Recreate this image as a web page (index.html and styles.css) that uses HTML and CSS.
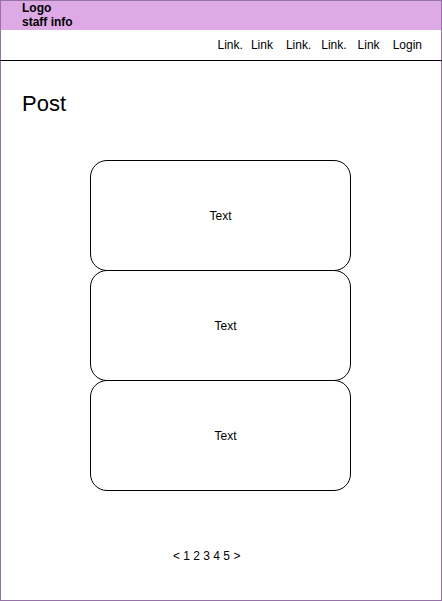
FILE: index.html
```html
<!DOCTYPE html>
<html>
<head>
<meta charset="utf-8">
<link rel="stylesheet" href="styles.css">
</head>
<body>
<div class="frame">
  <header class="top">
    <div class="logo">Logo<br>staff info</div>
  </header>
  <nav class="nav">
    <span class="l1">Link.</span>
    <span class="l2">Link</span>
    <span class="l3">Link.</span>
    <span class="l4">Link.</span>
    <span class="l5">Link</span>
    <span class="l6">Login</span>
  </nav>
  <main class="main">
    <h1 class="title">Post</h1>
    <div class="cards">
      <div class="card">Text</div>
      <div class="card shift">Text</div>
      <div class="card shift">Text</div>
    </div>
    <div class="pager">&lt; 1 2 3 4 5 &gt;</div>
  </main>
</div>
</body>
</html>
```
FILE: styles.css
```css
html, body {
  margin: 0;
  padding: 0;
  background: #fff;
}
body {
  font-family: "Liberation Sans", Arial, sans-serif;
  color: #000;
}
.frame {
  width: 442px;
  height: 601px;
  box-sizing: border-box;
  border: 1px solid #9673a6;
  display: flex;
  flex-direction: column;
}
.top {
  background: #ddaae6;
  height: 29px;
  box-sizing: border-box;
  padding: 0 0 0 21px;
}
.logo {
  font-size: 12px;
  font-weight: bold;
  line-height: 14px;
}
.nav {
  height: 30px;
  border-bottom: 1px solid #000;
  display: flex;
  justify-content: flex-end;
  align-items: center;
  font-size: 12px;
  line-height: 14px;
  padding-right: 20px;
  margin: 0 -1px;
  padding-left: 1px;
}
.l2 { margin-left: 8px; }
.l3 { margin-left: 13px; }
.l4 { margin-left: 10px; }
.l5 { margin-left: 11px; }
.l6 { margin-left: 13px; }
.main {
  display: flex;
  flex-direction: column;
}
.title {
  margin: 30px 0 0 21px;
  font-size: 22px;
  font-weight: normal;
  line-height: 26px;
}
.cards {
  margin: 43px 0 0 89px;
  display: flex;
  flex-direction: column;
}
.card {
  width: 261px;
  height: 111px;
  box-sizing: border-box;
  border: 1px solid #000;
  border-radius: 17px;
  background: #fff;
  display: flex;
  align-items: center;
  justify-content: center;
  font-size: 12px;
}
.card + .card {
  margin-top: -1px;
}
.shift {
  padding-left: 10px;
}
.pager {
  margin: 58px 0 0 172px;
  font-size: 12px;
  line-height: 14px;
}
```
